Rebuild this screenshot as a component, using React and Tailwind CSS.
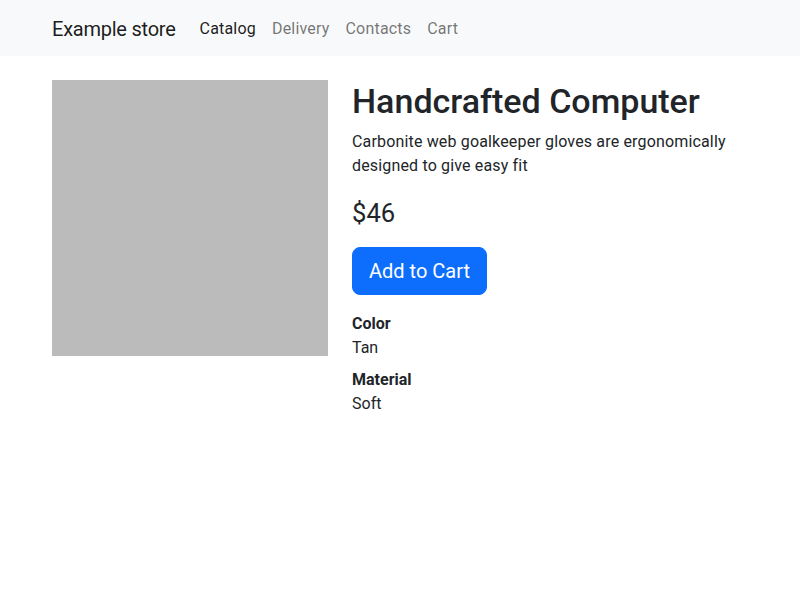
export default function App() {
  return (
    <div className="min-h-[600px] bg-white text-[#212529] text-[16px] leading-[1.5]" style={{ fontFamily: "Roboto, 'Helvetica Neue', Arial, sans-serif" }}>
      <nav className="bg-[#f8f9fa] h-[56px] pt-[9px] pb-[7px]">
        <div className="mx-auto w-[720px] px-3 flex items-center h-[40px]">
          <a className="text-[20px] leading-[30px] py-[5px] mr-4 text-black/90 tracking-[-0.012em]">Example store</a>
          <ul className="flex items-center tracking-[0.012em]">
            <li><a className="block px-2 py-2 leading-6 text-black/90">Catalog</a></li>
            <li><a className="block px-2 py-2 leading-6 text-black/55">Delivery</a></li>
            <li><a className="block px-2 py-2 leading-6 text-black/55">Contacts</a></li>
            <li><a className="block px-2 py-2 leading-6 text-black/55">Cart</a></li>
          </ul>
        </div>
      </nav>
      <div className="mx-auto w-[720px] px-3 mt-6">
        <div className="flex gap-6">
          <div className="w-[276px] shrink-0">
            <div className="w-[276px] h-[276px] bg-[#bbbbbb]" />
          </div>
          <div className="w-[396px] pt-px">
            <h1 className="text-[34px] leading-[1.2] font-medium mb-2">Handcrafted Computer</h1>
            <p className="mb-4 tracking-[0.01em]">Carbonite web goalkeeper gloves are ergonomically designed to give easy fit</p>
            <p className="text-[25.6px] leading-[1.5] font-normal mb-4">$46</p>
            <button className="bg-[#0d6efd] text-white text-[20px] leading-[30px] px-4 py-2 rounded-lg border border-[#0d6efd] mb-[17px] -mt-px">Add to Cart</button>
            <dl>
              <dt className="font-bold">Color</dt>
              <dd className="mb-2">Tan</dd>
              <dt className="font-bold">Material</dt>
              <dd className="mb-2">Soft</dd>
            </dl>
          </div>
        </div>
      </div>
    </div>
  );
}
